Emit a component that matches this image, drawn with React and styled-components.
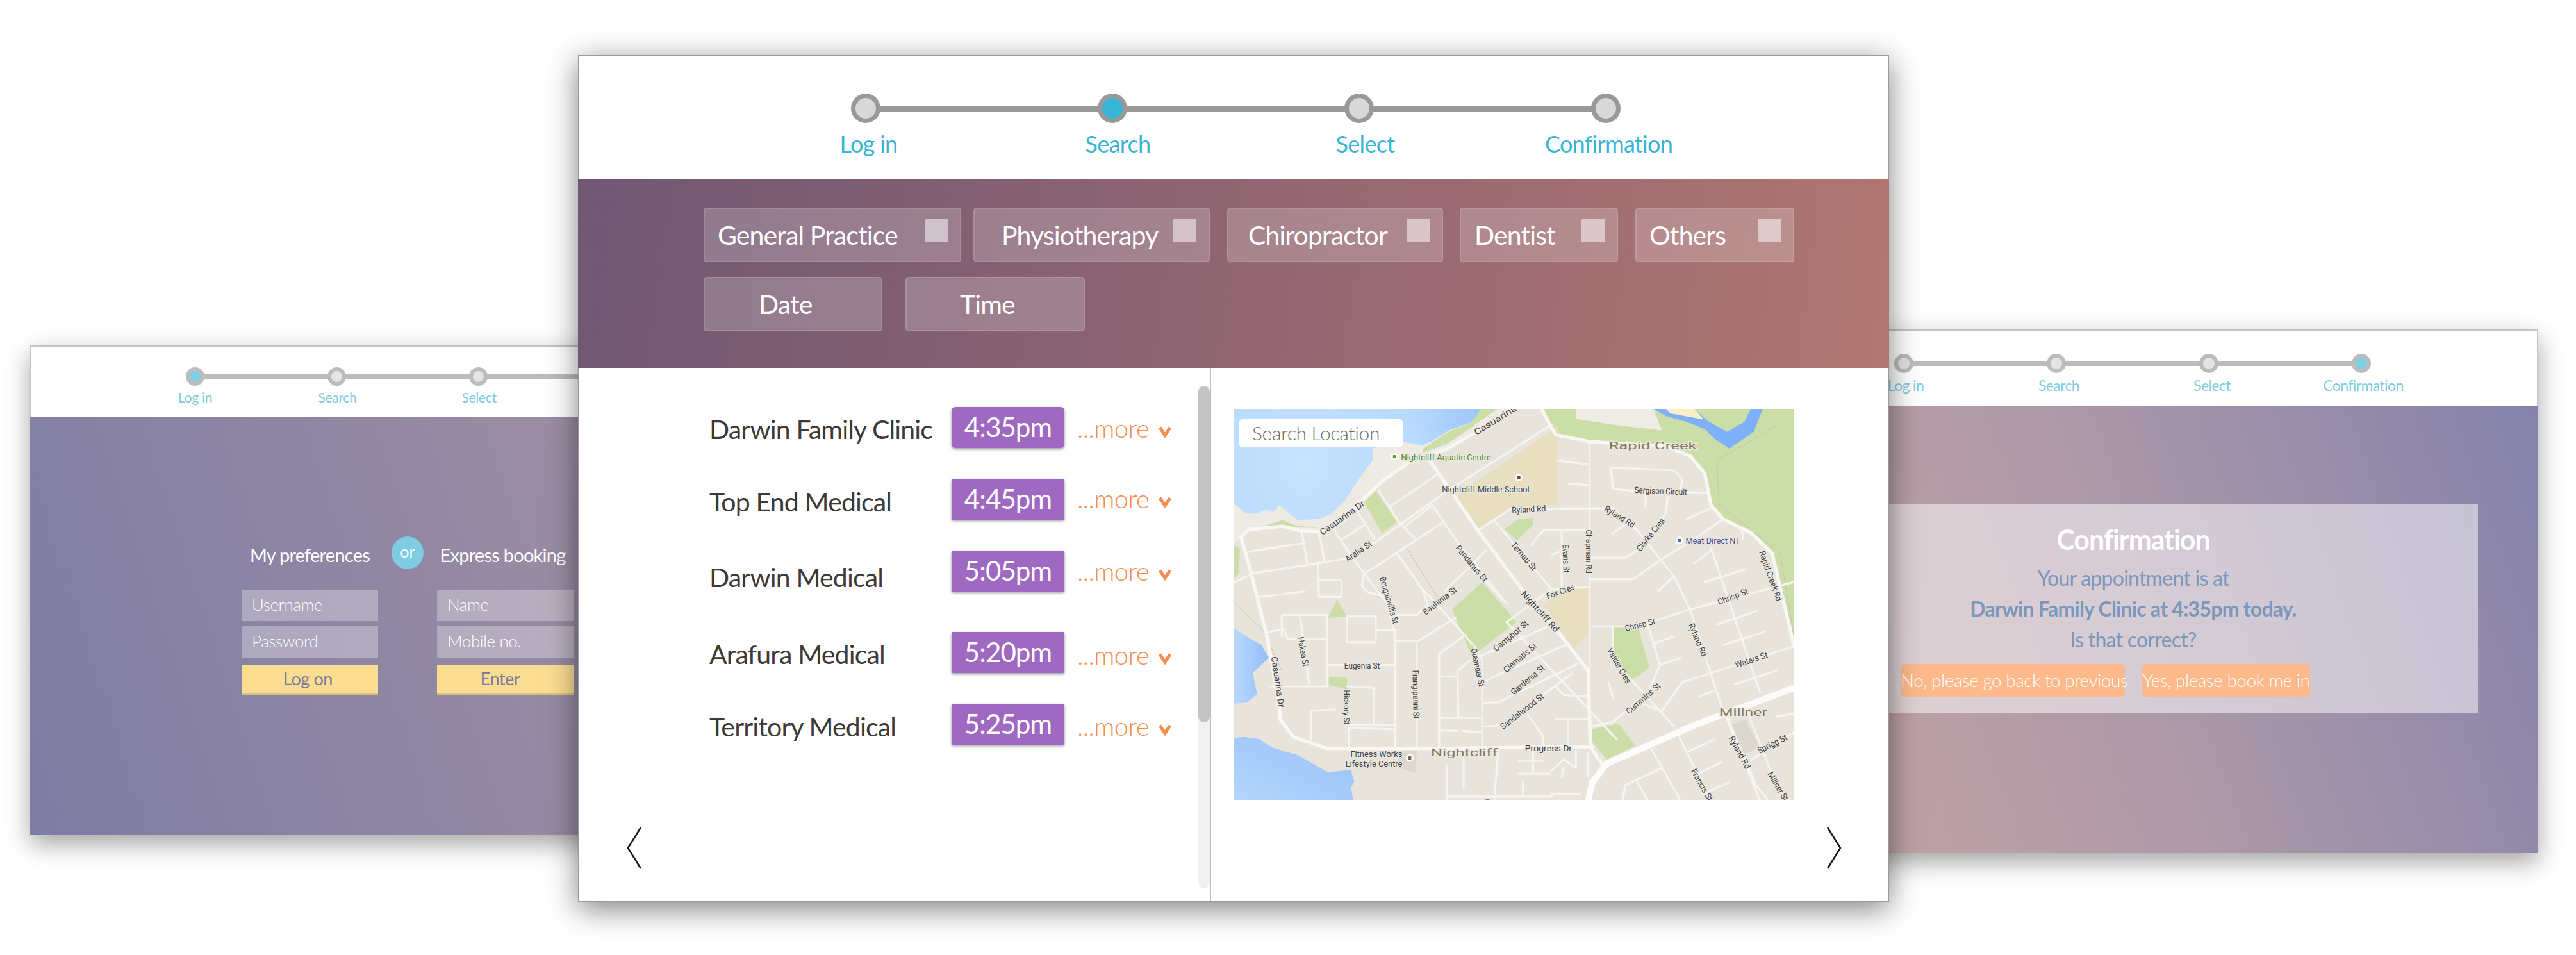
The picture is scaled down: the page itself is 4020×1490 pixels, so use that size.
import React from "react";
import styled, { createGlobalStyle } from "styled-components";

const FONT = `Lato, "Noto Sans", sans-serif`;

const GlobalStyle = createGlobalStyle`
  * { box-sizing: border-box; }
  html, body { margin: 0; padding: 0; background: #fff; font-family: ${FONT}; }
`;

const Canvas = styled.div`
  position: relative;
  width: 4020px;
  height: 1490px;
  overflow: hidden;
  background: #fff;
`;

const Window = styled.section`
  position: absolute;
  left: ${p => p.$x}px;
  top: ${p => p.$y}px;
  width: ${p => p.$w}px;
  height: ${p => p.$h}px;
  z-index: ${p => p.$z || 1};
  background: #fff;
  display: flex;
  flex-direction: column;
  border: 2px solid ${p => p.$line || "#c4c4c4"};
  box-shadow: ${p => p.$shadow || "0 14px 36px rgba(0,0,0,.36)"};
`;

const StepHeader = styled.header`
  height: ${p => p.$h}px;
  flex: none;
  display: flex;
  justify-content: center;
  padding-top: ${p => p.$top}px;
  padding-left: ${p => p.$shift || 0}px;
`;

const StepGrid = styled.ol`
  position: relative;
  display: grid;
  grid-template-columns: repeat(4, ${p => p.$gap}px);
  margin: 0;
  padding: 0;
  list-style: none;
  height: fit-content;

  &::before {
    content: "";
    position: absolute;
    left: ${p => p.$gap / 2}px;
    right: ${p => p.$gap / 2}px;
    top: ${p => (p.$dot - p.$bar) / 2}px;
    height: ${p => p.$bar}px;
    background: ${p => p.$tone};
  }
`;

const Step = styled.li`
  position: relative;
  display: flex;
  flex-direction: column;
  align-items: center;
`;

const Dot = styled.span`
  width: ${p => p.$size}px;
  height: ${p => p.$size}px;
  border-radius: 50%;
  border: ${p => p.$ring}px solid ${p => p.$tone};
  background: ${p => (p.$on ? p.$active : p.$fill)};
`;

const StepLabel = styled.span`
  margin-top: ${p => p.$top}px;
  margin-left: ${p => p.$nudge * 2}px;
  font-size: ${p => p.$size}px;
  letter-spacing: ${p => p.$track}px;
  line-height: 1.2;
  font-weight: 400;
  color: ${p => p.$color};
  white-space: nowrap;
`;

function Stepper({ active, gap, dot, ring, bar, tone, fill, activeFill, size, track, labelTop, color, nudges }) {
  const steps = ["Log in", "Search", "Select", "Confirmation"];
  return (
    <StepGrid $gap={gap} $dot={dot} $bar={bar} $tone={tone}>
      {steps.map((s, i) => (
        <Step key={s}>
          <Dot $size={dot} $ring={ring} $tone={tone} $fill={fill} $active={activeFill} $on={i === active} />
          <StepLabel $top={labelTop} $size={size} $track={track} $color={color} $nudge={nudges[i]}>
            {s}
          </StepLabel>
        </Step>
      ))}
    </StepGrid>
  );
}

/* left: login */
const LoginPanel = styled.div`
  flex: 1;
  margin: 0 -2px -2px;
  padding-top: 186px;
  background: linear-gradient(72deg, #7e7da4 0%, #8f86a4 45%, #a693a3 100%);
  display: flex;
  justify-content: center;
`;

const LoginForm = styled.div`
  display: grid;
  grid-template-columns: 213px 92px 213px;
  height: fit-content;
`;

const LoginColumn = styled.div`
  display: flex;
  flex-direction: column;
  gap: 8px;
`;

const LoginTitle = styled.h3`
  margin: 0 0 23px;
  height: 52px;
  padding-top: 3px;
  padding-right: ${p => p.$pull || 0}px;
  line-height: 52px;
  font-size: 29px;
  font-weight: 400;
  letter-spacing: -0.75px;
  color: #fff;
  text-align: center;
  white-space: nowrap;
`;

const OrBadge = styled.div`
  justify-self: center;
  width: 50px;
  height: 51px;
  border-radius: 50%;
  background: #7ecde2;
  color: #fff;
  font-size: 25px;
  text-align: center;
  line-height: 47px;
`;

const LoginInput = styled.div`
  height: 49px;
  line-height: 47px;
  padding-left: 16px;
  font-size: 26px;
  font-weight: 300;
  letter-spacing: -0.4px;
  color: #fff;
  background: rgba(255, 255, 255, 0.3);
`;

const LoginButton = styled.div`
  margin-top: 4px;
  height: 46px;
  line-height: 42px;
  padding-right: ${p => p.$pull}px;
  text-align: center;
  font-size: 27px;
  letter-spacing: -0.4px;
  color: #7b7a9f;
  background: #fbdd92;
  border-bottom: 2px solid #dcc07f;
`;

/* centre: booking */
const FilterPanel = styled.div`
  flex: none;
  height: 294px;
  margin: 0 -2px;
  padding: 44px 0 0 196px;
  background: linear-gradient(97deg, #705873 0%, #8c6372 42%, #b07672 100%);
  display: flex;
  flex-direction: column;
  gap: 23px;
`;

const FilterRow = styled.div`
  display: flex;
`;

const FilterTag = styled.div`
  width: ${p => p.$w}px;
  height: 85px;
  margin-right: ${p => p.$gap}px;
  padding: 0 19px 0 ${p => p.$pad}px;
  display: flex;
  align-items: center;
  justify-content: space-between;
  border: 2px solid rgba(255, 255, 255, 0.12);
  border-radius: 5px;
  background: rgba(255, 255, 255, 0.2);
  color: #fff;
  font-size: 41px;
  font-weight: 400;
  letter-spacing: -0.9px;
  white-space: nowrap;
`;

const FilterBox = styled.span`
  flex: none;
  width: 36px;
  height: 36px;
  margin-top: -14px;
  background: rgba(255, 255, 255, 0.52);
`;

const BookingBody = styled.div`
  flex: 1;
  min-height: 0;
  display: flex;
`;

const ListPane = styled.div`
  width: 986px;
  flex: none;
  display: flex;
  border-right: 2px solid #bdbdbd;
`;

const ListColumn = styled.div`
  flex: 1;
  padding: 61px 0 0 205px;
`;

const ClinicRow = styled.div`
  display: grid;
  grid-template-columns: 376px 176px auto;
  align-items: center;
  margin-top: ${p => p.$top}px;
`;

const ClinicName = styled.span`
  margin-left: -2px;
  font-size: 41px;
  letter-spacing: -0.85px;
  color: #3c3937;
  white-space: nowrap;
  transform: translateY(${p => p.$drop}px);
`;

const TimeBadge = styled.span`
  height: 64px;
  line-height: 62px;
  text-align: center;
  font-size: 42px;
  letter-spacing: -0.9px;
  color: #fff;
  background: #a069c1;
  border-radius: ${p => (p.$round ? 6 : 2)}px;
  box-shadow: 0 2px 4px rgba(0, 0, 0, 0.4);
`;

const MoreLink = styled.span`
  display: flex;
  align-items: center;
  margin-left: 20px;
  font-size: 40px;
  font-weight: 300;
  letter-spacing: -0.6px;
  color: #f58e4d;
  white-space: nowrap;
  transform: translateY(${p => p.$drop}px);

  svg {
    margin: 10px 0 0 15px;
  }
`;

const NavArrow = styled.svg`
  display: block;
  flex: none;
`;

const PrevWrap = styled.div`
  margin: 128px 0 0 -131px;
`;

const ScrollTrack = styled.div`
  flex: none;
  width: 18px;
  height: 784px;
  margin-top: 28px;
  background: #f0f0f0;
  border-radius: 9px;
`;

const ScrollThumb = styled.div`
  height: 525px;
  background: #c4c4c4;
  border-radius: 9px;
`;

const MapPane = styled.div`
  flex: 1;
  padding: 64px 0 0 35px;
  display: flex;
  flex-direction: column;
`;

const MapFrame = styled.div`
  position: relative;
  width: 874px;
  height: 610px;
  overflow: hidden;
`;

const MapSearch = styled.div`
  position: absolute;
  left: 9px;
  top: 16px;
  width: 255px;
  height: 44px;
  line-height: 42px;
  padding-left: 20px;
  background: #fff;
  border-radius: 5px;
  font-size: 30px;
  font-weight: 300;
  letter-spacing: -0.3px;
  color: #6a6a6a;
`;

const NextWrap = styled.div`
  margin: 42px 0 0 925px;
`;

/* right: confirmation */
const ConfirmPanel = styled.div`
  flex: 1;
  margin: 0 -2px -2px;
  padding-top: 153px;
  background: linear-gradient(70deg, #c8a5a3 0%, #ad99a8 50%, #8582ac 100%);
`;

const ConfirmCard = styled.div`
  width: 1076px;
  height: 325px;
  margin-left: 96px;
  padding-top: 28px;
  background: rgba(255, 255, 255, 0.5);
`;

const ConfirmTitle = styled.h2`
  margin: 0 0 9px;
  font-size: 43px;
  line-height: 54px;
  font-weight: 700;
  letter-spacing: -1.1px;
  color: #fff;
  text-align: center;
`;

const ConfirmLine = styled.p`
  margin: 0;
  height: 48px;
  line-height: 48px;
  font-size: 32px;
  font-weight: ${p => (p.$bold ? 700 : 400)};
  letter-spacing: -0.75px;
  color: #7b97bc;
  text-align: center;
  white-space: nowrap;
`;

const ConfirmActions = styled.div`
  display: flex;
  gap: 27px;
  margin: 14px 0 0 175px;
`;

const ConfirmButton = styled.div`
  width: ${p => p.$w}px;
  height: 52px;
  line-height: 50px;
  text-align: center;
  font-size: 28px;
  font-weight: 300;
  letter-spacing: -0.5px;
  color: #fff;
  background: #fcb98c;
  border-radius: 7px;
  white-space: nowrap;
`;

/* map drawing, traced in the coordinates of zoomed crops */
const MX = x => ((x - 72) / 1.568).toFixed(1);
const MY = y => ((y - 85) / 2.24).toFixed(1);
const pts = a => {
  const out = [];
  for (let i = 0; i < a.length; i += 2) out.push(`${MX(a[i])},${MY(a[i + 1])}`);
  return out.join(" ");
};
// 3x crops of the map, dy is where the crop starts
const crop = (a, dy = 0) => {
  const out = [];
  for (let i = 0; i < a.length; i += 2) out.push(`${(a[i] / 3).toFixed(1)},${(a[i + 1] / 3 + dy).toFixed(1)}`);
  return out.join(" ");
};

const COAST = [
  ["url(#bay)", [0, 0, 1160, 0, 1120, 60, 1010, 100, 930, 150, 885, 170, 800, 155, 650, 185, 652, 240, 600, 310, 520, 430, 460, 490, 400, 515, 300, 520, 250, 480, 215, 450, 190, 480, 150, 470, 110, 490, 60, 490, 35, 470, 0, 440], 0],
  ["url(#inlet)", [0, 110, 70, 155, 130, 190, 165, 250, 90, 320, 110, 420, 60, 460, 0, 465], 305],
  ["url(#shore)", [0, 625, 50, 620, 120, 630, 180, 670, 300, 705, 440, 785, 550, 775, 565, 830, 550, 855, 560, 915, 0, 915], 305],
  ["#cbdea8", [885, 190, 940, 150, 1010, 105, 1110, 65, 1160, 0, 1235, 0, 1100, 95, 1000, 165, 885, 205], 0],
  ["#cbdea8", [135, 552, 230, 520, 290, 545, 400, 558, 250, 552, 140, 560], 0],
  ["#cbdea8", [0, 640, 30, 650, 25, 770, 0, 800], 0],
];

const AREAS = [
  ["#eeebe4", [72, 85, 760, 85, 663, 167, 595, 225, 505, 268, 438, 335, 391, 398, 344, 473, 284, 514, 192, 495, 109, 507, 90, 533, 72, 560]],
  ["#cbdea8", [832, 85, 860, 175, 945, 200, 1130, 215, 1190, 250, 1225, 310, 1240, 420, 1270, 470, 1340, 510, 1390, 590, 1420, 750, 1443, 900, 1443, 85]],
  ["#efece5", [910, 85, 1100, 85, 1120, 160, 1000, 140, 910, 120]],
  ["#7fb0fb", [1100, 85, 1130, 110, 1180, 130, 1225, 155, 1250, 190, 1285, 224, 1345, 165, 1367, 85]],
  ["#cbdea8", [1200, 85, 1230, 125, 1280, 165, 1322, 130, 1338, 85]],
  ["#f8efc4", [1130, 85, 1140, 100, 1222, 122, 1200, 85]],
  ["#e8dfc0", [865, 145, 865, 420, 750, 430, 670, 505, 610, 395]],
  ["#e8dfc0", [830, 770, 880, 715, 940, 712, 940, 870, 905, 925]],
  ["#cbdea8", [420, 372, 472, 480, 435, 520, 392, 410]],
  ["#cbdea8", [680, 690, 765, 830, 655, 950, 607, 785]],
  ["#cbdea8", [1000, 850, 1062, 850, 1090, 990, 1040, 1040, 1000, 960]],
  ["#cbdea8", [735, 505, 770, 470, 805, 465, 805, 490, 765, 545]],
  ["#cbdea8", [950, 1205, 1015, 1185, 1055, 1262, 985, 1310, 950, 1250]],
  ["#cbdea8", [305, 1022, 350, 1022, 350, 1065, 305, 1050]],
  ["#cbdea8", [325, 750, 350, 812, 303, 815]],
  ["#dcd8d0", [1290, 1190, 1325, 1170, 1360, 1270, 1320, 1290]],
  ["#dcd8d0", [485, 1276, 521, 1276, 516, 1358, 469, 1336]],
];

const MAJOR = [
  [760, 85, 663, 167, 595, 225, 505, 268, 438, 335, 391, 398, 344, 473, 284, 514, 239, 512, 192, 495, 109, 507, 90, 533, 116, 664, 156, 895, 184, 1127, 187, 1172, 218, 1231, 302, 1272, 560, 1272, 950, 1265],
  [548, 257, 670, 510, 780, 720, 880, 890, 940, 1000, 945, 1265, 975, 1330],
  [825, 85, 860, 175, 945, 200, 1130, 215, 1190, 250, 1225, 310, 1240, 420, 1270, 470, 1340, 520, 1390, 590, 1443, 910],
];

const MINOR = [
  [943, 200, 943, 1000],
  [670, 510, 750, 435, 1000, 432, 1060, 510, 1150, 670, 1190, 790, 1265, 1120, 1360, 1452],
  [945, 845, 1060, 845, 1190, 785, 1443, 690],
  [1120, 1140, 1170, 1040, 1443, 915],
  [72, 693, 119, 660, 349, 608, 407, 563, 595, 372, 850, 140],
  [865, 265, 943, 280],
  [893, 345, 943, 352],
  [1000, 360, 995, 290, 1150, 300, 1170, 330, 1165, 375, 1235, 378],
  [1000, 365, 1120, 380],
  [1080, 380, 1080, 430],
  [1135, 380, 1130, 450, 1060, 580, 1030, 605, 945, 605],
  [1180, 470, 1240, 432],
  [1000, 520, 1040, 480],
  [945, 680, 1050, 680, 1120, 610, 1200, 540, 1270, 470],
  [1240, 570, 1360, 1075],
  [1315, 505, 1320, 540],
  [1200, 625, 1240, 580],
  [1225, 690, 1325, 645],
  [1112, 720, 1150, 670],
  [1255, 838, 1355, 790],
  [1270, 910, 1370, 865],
  [1297, 1048, 1400, 1000],
  [1212, 1090, 1245, 1072],
  [800, 560, 830, 510, 943, 510],
  [850, 595, 880, 580],
  [875, 510, 875, 710],
  [710, 475, 850, 715, 943, 708],
  [850, 715, 740, 830],
  [740, 765, 690, 690],
  [456, 425, 569, 316],
  [495, 492, 558, 421],
  [558, 421, 626, 563, 740, 765],
  [740, 830, 1010, 1240],
  [427, 369, 477, 481, 516, 537],
  [318, 507, 357, 593, 448, 768, 468, 880, 468, 1272],
  [375, 443, 417, 540],
  [582, 484, 422, 634, 391, 660, 386, 705, 400, 725, 440, 740],
  [474, 593, 532, 712, 548, 770, 520, 805, 470, 805],
  [474, 593, 532, 712, 569, 768, 663, 917, 681, 962, 681, 1265],
  [590, 720, 690, 580],
  [615, 815, 525, 895, 470, 895],
  [640, 875, 575, 940, 575, 1265],
  [520, 900, 520, 1270],
  [850, 840, 650, 965, 620, 1000, 622, 1160],
  [690, 1035, 740, 1000, 885, 910],
  [685, 1112, 720, 1110, 915, 975],
  [685, 1195, 730, 1190, 900, 1010],
  [860, 1055, 880, 1085, 940, 1090],
  [790, 1150, 830, 1230, 830, 1265],
  [890, 1170, 890, 1265],
  [860, 1168, 945, 1168],
  [575, 1165, 680, 1165],
  [575, 1020, 620, 1020],
  [575, 1210, 620, 1210],
  [630, 1210, 680, 1215],
  [470, 1205, 355, 1200, 355, 1270],
  [262, 1240, 262, 1140, 320, 1135],
  [278, 623, 281, 742],
  [281, 682, 336, 682, 336, 742, 281, 742],
  [239, 514, 252, 622],
  [281, 514, 294, 615],
  [103, 585, 239, 555],
  [135, 742, 244, 723],
  [339, 540, 391, 492],
  [190, 880, 190, 805, 300, 805, 302, 1055, 160, 1055],
  [235, 810, 258, 1055],
  [155, 865, 195, 855, 205, 890, 300, 890],
  [305, 980, 465, 980],
  [350, 810, 420, 810, 420, 900, 350, 900, 350, 810],
  [420, 858, 470, 858],
  [350, 1055, 415, 1060, 415, 1190, 350, 1190],
  [415, 1190, 470, 1190],
  [1000, 850, 1000, 925],
  [990, 1040, 1000, 1095],
  [1085, 840, 1100, 905, 1115, 980, 1080, 1100],
  [1100, 905, 1150, 880],
  [1115, 980, 1165, 955],
  [945, 1195, 1000, 1180, 1060, 1110, 1120, 1140],
  [1000, 960, 1150, 1195],
  [1160, 1225, 1240, 1452],
  [1180, 1285, 1250, 1240],
  [1195, 1370, 1265, 1320],
  [1220, 1430, 1285, 1390],
  [1095, 1275, 1165, 1452],
  [1025, 1452, 1030, 1400, 1120, 1340],
  [1060, 1390, 1085, 1452],
  [1280, 1160, 1350, 1400, 1380, 1452],
  [1330, 1145, 1400, 1400, 1430, 1452],
  [1340, 1310, 1443, 1215],
  [1400, 1160, 1443, 1150],
  [720, 1272, 710, 1452],
  [595, 1330, 595, 1452],
  [635, 1310, 635, 1410],
  [770, 1315, 830, 1315],
  [805, 1285, 805, 1360],
  [770, 1360, 845, 1360],
  [850, 1350, 880, 1310, 910, 1340, 910, 1280],
  [880, 1340, 875, 1375],
  [940, 1290, 940, 1370],
  [780, 1385, 780, 1430],
  [600, 1440, 780, 1440, 850, 1440, 850, 1430, 920, 1430],
];

const THIN = [
  [495, 570, 574, 750],
  [1255, 265, 1400, 145],
  [1255, 265, 1260, 420, 1410, 590, 1443, 880],
  [72, 760, 145, 860, 190, 1000],
];

const LABELS = [
  ["Casuarina Dr", 662, 168, 790, 55],
  ["Nightcliff Aquatic Centre", 482, 252, 702, 252, "#4a8a1c"],
  ["Nightcliff Middle School", 582, 364, 796, 364],
  ["Rapid Creek", 990, 212, 1205, 212, "#85775c", 17],
  ["Sergison Circuit", 1053, 367, 1182, 375],
  ["Ryland Rd", 753, 438, 836, 432],
  ["Ryland Rd", 982, 430, 1052, 492],
  ["Clarke Cres", 1062, 578, 1122, 470],
  ["Meat Direct NT", 1178, 545, 1312, 545, "#44509a"],
  ["Casuarina Dr", 285, 518, 390, 412],
  ["Aralia St", 347, 612, 408, 552],
  ["Pandanus St", 620, 565, 690, 685],
  ["Ternau St", 755, 553, 810, 645],
  ["Evans St", 885, 558, 887, 658],
  ["Chapman Rd", 942, 507, 942, 660],
  ["Rapid Creek Rd", 1365, 582, 1408, 755],
  ["Fox Cres", 838, 740, 905, 705],
  ["Chrisp St", 1257, 760, 1330, 720],
  ["Chrisp St", 1030, 852, 1103, 825],
  ["Nightcliff Rd", 780, 725, 865, 860],
  ["Bougainvillia St", 437, 672, 470, 835],
  ["Bauhinia St", 537, 798, 615, 712],
  ["Camphor St", 710, 925, 790, 830],
  ["Ryland Rd", 1192, 835, 1225, 948],
  ["Hakea St", 236, 882, 250, 985],
  ["Casuarina Dr", 172, 950, 190, 1128],
  ["Eugenia St", 343, 982, 430, 982],
  ["Valder Cres", 992, 923, 1040, 1042],
  ["Clematis St", 735, 1000, 810, 908],
  ["Oleander St", 660, 922, 680, 1055],
  ["Waters St", 1300, 980, 1378, 942],
  ["Frangipanni St", 518, 998, 520, 1168],
  ["Gardenia St", 753, 1078, 830, 985],
  ["Cummins St", 1035, 1145, 1113, 1048],
  ["Hickory St", 350, 1067, 350, 1188],
  ["Sandalwood St", 727, 1198, 828, 1085],
  ["Millner", 1260, 1145, 1378, 1145, "#85775c", 17],
  ["Nightcliff", 555, 1285, 718, 1285, "#85775c", 17],
  ["Progress Dr", 785, 1270, 900, 1270],
  ["Fitness Works", 358, 1290, 485, 1290],
  ["Lifestyle Centre", 346, 1323, 485, 1323],
  ["Ryland Rd", 1290, 1230, 1332, 1340],
  ["Sprigg St", 1355, 1280, 1425, 1230],
  ["Francis St", 1197, 1345, 1240, 1452],
  ["Millner St", 1385, 1355, 1425, 1452],
  ["Coconut", 680, 1462, 825, 1462, "#85775c", 17],
];

const PINS = [
  [466, 252, "#5d9e23"],
  [770, 325, "#6d4b3f"],
  [1163, 545, "#5560b0"],
  [503, 1305, "#7a5a52"],
];

function MapArt() {
  return (
    <svg width="874" height="610" viewBox="0 0 874 610" style={{ display: "block" }}>
      <defs>
        <radialGradient id="bay" gradientUnits="userSpaceOnUse" cx="110" cy="90" r="300">
          <stop offset="0" stopColor="#c6e3fe" />
          <stop offset="0.6" stopColor="#b8dafd" />
          <stop offset="1" stopColor="#9cc3fb" />
        </radialGradient>
        <linearGradient id="inlet" x1="0" y1="0" x2="1" y2="0">
          <stop offset="0" stopColor="#b9dafd" />
          <stop offset="1" stopColor="#93bcfa" />
        </linearGradient>
        <linearGradient id="shore" x1="0" y1="1" x2="1" y2="0">
          <stop offset="0" stopColor="#b4d6fc" />
          <stop offset="1" stopColor="#98c0fa" />
        </linearGradient>
      </defs>
      <rect width="874" height="610" fill="#e8e4dc" />
      {AREAS.map(([fill, a], i) => (
        <polygon key={i} points={pts(a)} fill={fill} />
      ))}
      {COAST.map(([fill, a, dy], i) => (
        <polygon key={i} points={crop(a, dy)} fill={fill} />
      ))}
      <g fill="none" stroke="#c6c2b6" strokeWidth="1">
        {THIN.map((a, i) => (
          <polyline key={i} points={pts(a)} />
        ))}
      </g>
      <g fill="none" stroke="#f6f4ef" strokeWidth="3.2" strokeLinejoin="round" strokeLinecap="round">
        {MINOR.map((a, i) => (
          <polyline key={i} points={pts(a)} />
        ))}
      </g>
      <g fill="none" stroke="#f9f7f3" strokeWidth="5.4" strokeLinejoin="round" strokeLinecap="round">
        {MAJOR.map((a, i) => (
          <polyline key={i} points={pts(a)} />
        ))}
      </g>
      <polyline points={pts([1443, 1060, 1200, 1190, 985, 1325, 950, 1390, 940, 1452])} fill="none" stroke="#fdfcfa" strokeWidth="10" />
      {PINS.map(([x, y, c], i) => (
        <g key={i}>
          <circle cx={MX(x)} cy={MY(y)} r="6" fill="#fff" />
          <rect x={MX(x) - 2.5} y={MY(y) - 2.5} width="5" height="5" fill={c} />
        </g>
      ))}
      {LABELS.map(([t, x1, y1, x2, y2, c, s], i) => {
        const ax = +MX(x1), ay = +MY(y1), bx = +MX(x2), by = +MY(y2);
        const len = Math.hypot(bx - ax, by - ay);
        const deg = (Math.atan2(by - ay, bx - ax) * 180) / Math.PI;
        return (
          <text
            key={i}
            x="0"
            y="0"
            transform={`translate(${(ax + bx) / 2} ${(ay + by) / 2}) rotate(${deg})`}
            textAnchor="middle"
            dominantBaseline="central"
            textLength={len}
            lengthAdjust="spacingAndGlyphs"
            fontFamily={`Roboto, "Liberation Sans", sans-serif`}
            fontSize={s || 13.5}
            fill={c || "#3f3f3f"}
            stroke="#ece9e2"
            strokeWidth="2.4"
            paintOrder="stroke"
          >
            {t}
          </text>
        );
      })}
    </svg>
  );
}

const Chevron = () => (
  <svg width="20" height="19" viewBox="0 0 20 19">
    <polyline points="2,3 10,15 18,3" fill="none" stroke="#f58e4d" strokeWidth="5" />
  </svg>
);

const CLINICS = [
  { name: "Darwin Family Clinic", time: "4:35pm", top: 0, round: true, nameDrop: 2, moreDrop: 1 },
  { name: "Top End Medical", time: "4:45pm", top: 48, nameDrop: 3, moreDrop: -1 },
  { name: "Darwin Medical", time: "5:05pm", top: 48, nameDrop: 9, moreDrop: 0 },
  { name: "Arafura Medical", time: "5:20pm", top: 63, nameDrop: 2, moreDrop: 4 },
  { name: "Territory Medical", time: "5:25pm", top: 48, nameDrop: 3, moreDrop: 3 },
];

const FILTERS = [
  { label: "General Practice", w: 402, gap: 19, pad: 20 },
  { label: "Physiotherapy", w: 369, gap: 27, pad: 42 },
  { label: "Chiropractor", w: 337, gap: 26, pad: 31 },
  { label: "Dentist", w: 247, gap: 27, pad: 21 },
  { label: "Others", w: 248, gap: 0, pad: 20 },
];

const sideStepper = {
  dot: 29,
  ring: 6,
  bar: 8,
  tone: "#bcbcbc",
  fill: "#e4e4e4",
  activeFill: "#7fcfe3",
  color: "#7fcde0",
};

export default function App() {
  return (
    <Canvas>
      <GlobalStyle />

      <Window $x={47} $y={539} $w={1178} $h={764} $z={1}>
        <StepHeader $h={110} $top={32}>
          <Stepper {...sideStepper} active={0} gap={221} size={21} track={-0.3} labelTop={5} nudges={[0, 1, 1, 1]} />
        </StepHeader>
        <LoginPanel>
          <LoginForm>
            <LoginColumn>
              <LoginTitle>My preferences</LoginTitle>
              <LoginInput>Username</LoginInput>
              <LoginInput>Password</LoginInput>
              <LoginButton $pull={6}>Log on</LoginButton>
            </LoginColumn>
            <OrBadge>or</OrBadge>
            <LoginColumn>
              <LoginTitle $pull={8}>Express booking</LoginTitle>
              <LoginInput>Name</LoginInput>
              <LoginInput>Mobile no.</LoginInput>
              <LoginButton $pull={16}>Enter</LoginButton>
            </LoginColumn>
          </LoginForm>
        </LoginPanel>
      </Window>

      <Window $x={2695} $y={514} $w={1266} $h={817} $z={1}>
        <StepHeader $h={118} $top={36}>
          <Stepper {...sideStepper} dot={30} active={3} gap={238} size={23} track={-0.6} labelTop={6} nudges={[3, 4, 5, 3]} />
        </StepHeader>
        <ConfirmPanel>
          <ConfirmCard>
            <ConfirmTitle>Confirmation</ConfirmTitle>
            <ConfirmLine>Your appointment is at</ConfirmLine>
            <ConfirmLine $bold>Darwin Family Clinic at 4:35pm today.</ConfirmLine>
            <ConfirmLine>Is that correct?</ConfirmLine>
            <ConfirmActions>
              <ConfirmButton $w={350}>No, please go back to previous</ConfirmButton>
              <ConfirmButton $w={262}>Yes, please book me in</ConfirmButton>
            </ConfirmActions>
          </ConfirmCard>
        </ConfirmPanel>
      </Window>

      <Window $x={902} $y={86} $w={2046} $h={1322} $z={3} $line="#9a9a9a" $shadow="0 10px 44px rgba(0,0,0,.5)">
        <StepHeader $h={192} $top={58} $shift={6}>
          <Stepper
            active={1}
            gap={385}
            dot={46}
            ring={7}
            bar={9}
            tone="#999"
            fill="#d8d8d8"
            activeFill="#38b4d6"
            size={36}
            track={-0.7}
            labelTop={11}
            color="#38b4d6"
            nudges={[5, 9, 10, 5]}
          />
        </StepHeader>
        <FilterPanel>
          <FilterRow>
            {FILTERS.map(f => (
              <FilterTag key={f.label} $w={f.w} $gap={f.gap} $pad={f.pad}>
                {f.label}
                <FilterBox />
              </FilterTag>
            ))}
          </FilterRow>
          <FilterRow>
            <FilterTag $w={279} $gap={36} $pad={84}>Date</FilterTag>
            <FilterTag $w={280} $gap={0} $pad={83}>Time</FilterTag>
          </FilterRow>
        </FilterPanel>
        <BookingBody>
          <ListPane>
            <ListColumn>
              {CLINICS.map(c => (
                <ClinicRow key={c.name} $top={c.top}>
                  <ClinicName $drop={c.nameDrop}>{c.name}</ClinicName>
                  <TimeBadge $round={c.round}>{c.time}</TimeBadge>
                  <MoreLink $drop={c.moreDrop}>
                    ...more
                    <Chevron />
                  </MoreLink>
                </ClinicRow>
              ))}
              <PrevWrap>
                <NavArrow width="24" height="66" viewBox="0 0 24 66">
                  <polyline points="22,1 2,33 22,65" fill="none" stroke="#111" strokeWidth="2.5" />
                </NavArrow>
              </PrevWrap>
            </ListColumn>
            <ScrollTrack>
              <ScrollThumb />
            </ScrollTrack>
          </ListPane>
          <MapPane>
            <MapFrame>
              <MapArt />
              <MapSearch>Search Location</MapSearch>
            </MapFrame>
            <NextWrap>
              <NavArrow width="24" height="66" viewBox="0 0 24 66">
                <polyline points="2,1 22,33 2,65" fill="none" stroke="#111" strokeWidth="2.5" />
              </NavArrow>
            </NextWrap>
          </MapPane>
        </BookingBody>
      </Window>
    </Canvas>
  );
}
